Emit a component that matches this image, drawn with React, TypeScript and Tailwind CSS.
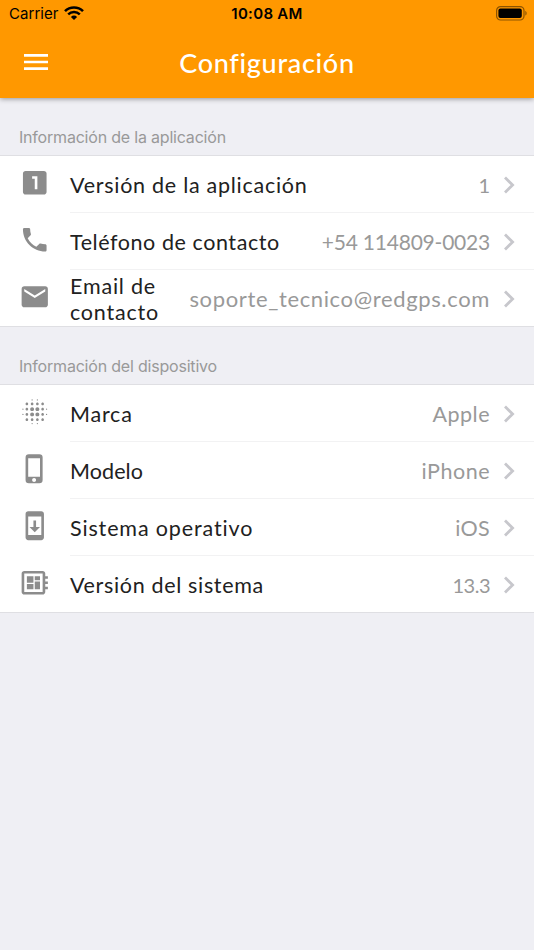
import { clsx } from "clsx";
import type { IconType } from "react-icons";
import {
  MdBlurOn,
  MdDeveloperBoard,
  MdEmail,
  MdLooksOne,
  MdMenu,
  MdPhone,
  MdPhoneIphone,
  MdSystemUpdate,
} from "react-icons/md";

interface Setting {
  icon: IconType;
  label: string;
  value: string;
  labelClass?: string;
  valueClass?: string;
}

const appInfo: Setting[] = [
  {
    icon: MdLooksOne,
    label: "Versión de la aplicación",
    value: "1",
    labelClass: "tracking-[0.73px]",
    valueClass: "text-[20px]",
  },
  {
    icon: MdPhone,
    label: "Teléfono de contacto",
    value: "+54 114809-0023",
    labelClass: "tracking-[0.57px]",
    valueClass: "text-[21px] tracking-[-0.22px]",
  },
  {
    icon: MdEmail,
    label: "Email de contacto",
    value: "soporte_tecnico@redgps.com",
    labelClass: "w-[100px] tracking-[0.8px]",
    valueClass: "text-[22px] tracking-[0.64px]",
  },
];

const deviceInfo: Setting[] = [
  {
    icon: MdBlurOn,
    label: "Marca",
    value: "Apple",
    labelClass: "tracking-[0.8px]",
    valueClass: "text-[21.5px] tracking-[0.5px]",
  },
  {
    icon: MdPhoneIphone,
    label: "Modelo",
    value: "iPhone",
    labelClass: "tracking-[0.1px]",
    valueClass: "text-[21.5px] tracking-[0.5px]",
  },
  {
    icon: MdSystemUpdate,
    label: "Sistema operativo",
    value: "iOS",
    labelClass: "tracking-[0.86px]",
    valueClass: "text-[21.5px] tracking-[0.3px]",
  },
  {
    icon: MdDeveloperBoard,
    label: "Versión del sistema",
    value: "13.3",
    labelClass: "tracking-[0.66px]",
    valueClass: "text-[20px] tracking-[-0.5px]",
  },
];

function WifiIcon() {
  return (
    <svg className="ml-[5px] mt-[-2px] h-[14px] w-[20px]" viewBox="0 0 20 14" fill="none" stroke="black">
      <path d="M1 5.2a12.8 12.8 0 0 1 18 0" strokeWidth="2.6" />
      <path d="M4.2 8.4a8.2 8.2 0 0 1 11.6 0" strokeWidth="2.4" />
      <path d="M10 14 6.9 10.9a4.4 4.4 0 0 1 6.2 0Z" fill="black" stroke="none" />
    </svg>
  );
}

function BatteryIcon() {
  return (
    <svg className="mt-[-2px] h-[15px] w-[32px]" viewBox="0 0 32 15">
      <rect
        x="0.6"
        y="0.6"
        width="27.4"
        height="13.4"
        rx="4"
        fill="none"
        stroke="black"
        strokeOpacity="0.45"
        strokeWidth="1.2"
      />
      <rect x="2.4" y="2.4" width="23.4" height="9.6" rx="2" />
      <path d="M29.4 5v4.6c1.6-.6 1.6-4 0-4.6Z" fillOpacity="0.5" />
    </svg>
  );
}

function StatusBar() {
  return (
    <div className="grid h-7 grid-cols-3 items-center pl-[9px] pr-[6px] font-['Inter',sans-serif] text-[15px] text-black">
      <div className="flex items-center">
        <span className="tracking-[0.05px]">Carrier</span>
        <WifiIcon />
      </div>
      <span className="pr-[3px] text-center font-semibold tracking-[0.3px]">10:08 AM</span>
      <div className="flex justify-end">
        <BatteryIcon />
      </div>
    </div>
  );
}

function SettingRow({ icon: Icon, label, value, labelClass, valueClass }: Setting) {
  return (
    <li className="group flex h-[57px] pl-[19px] last:h-14">
      <Icon className="mt-[11px] size-[31.5px] shrink-0 text-[#8c8c8c]" />
      <div className="ml-[19.5px] flex min-w-0 flex-1 items-center border-b border-[#f2f2f3] pr-[19px] pt-[2px] leading-[26px] group-last:border-b-0">
        <span className={clsx("text-[21.5px] text-[#212121]", labelClass)}>{label}</span>
        <span className={clsx("ml-auto whitespace-nowrap text-[#999999]", valueClass)}>{value}</span>
        <svg
          className="ml-[13px] h-[18px] w-[12px] shrink-0"
          viewBox="0 0 12 18"
          fill="none"
          stroke="#c7c7cc"
          strokeWidth="2.8"
        >
          <path d="m2 1.4 7.6 7.6L2 16.6" />
        </svg>
      </div>
    </li>
  );
}

function Section({ title, settings }: { title: string; settings: Setting[] }) {
  return (
    <section>
      <h2 className="flex h-[57px] items-end pb-[7px] pl-[19px] font-['Inter',sans-serif] text-[16px] leading-[22px] tracking-[-0.2px] text-[#999999]">
        {title}
      </h2>
      <ul className="border-y border-[#dfdfe3] bg-white">
        {settings.map((setting) => (
          <SettingRow key={setting.label} {...setting} />
        ))}
      </ul>
    </section>
  );
}

export default function App() {
  return (
    <div className="min-h-screen bg-[#efeff4] font-['Lato',sans-serif]">
      <header className="relative h-[98px] bg-[#ff9800] shadow-[0_1px_5px_rgba(0,0,0,0.38)]">
        <StatusBar />
        <div className="grid h-[70px] grid-cols-[72px_1fr_72px] items-center text-white">
          <MdMenu className="ml-[20px] mt-[-2px] size-[32px]" />
          <h1 className="text-center text-[27px] font-medium tracking-[0.7px]">Configuración</h1>
        </div>
      </header>
      <main>
        <Section title="Información de la aplicación" settings={appInfo} />
        <Section title="Información del dispositivo" settings={deviceInfo} />
      </main>
    </div>
  );
}
